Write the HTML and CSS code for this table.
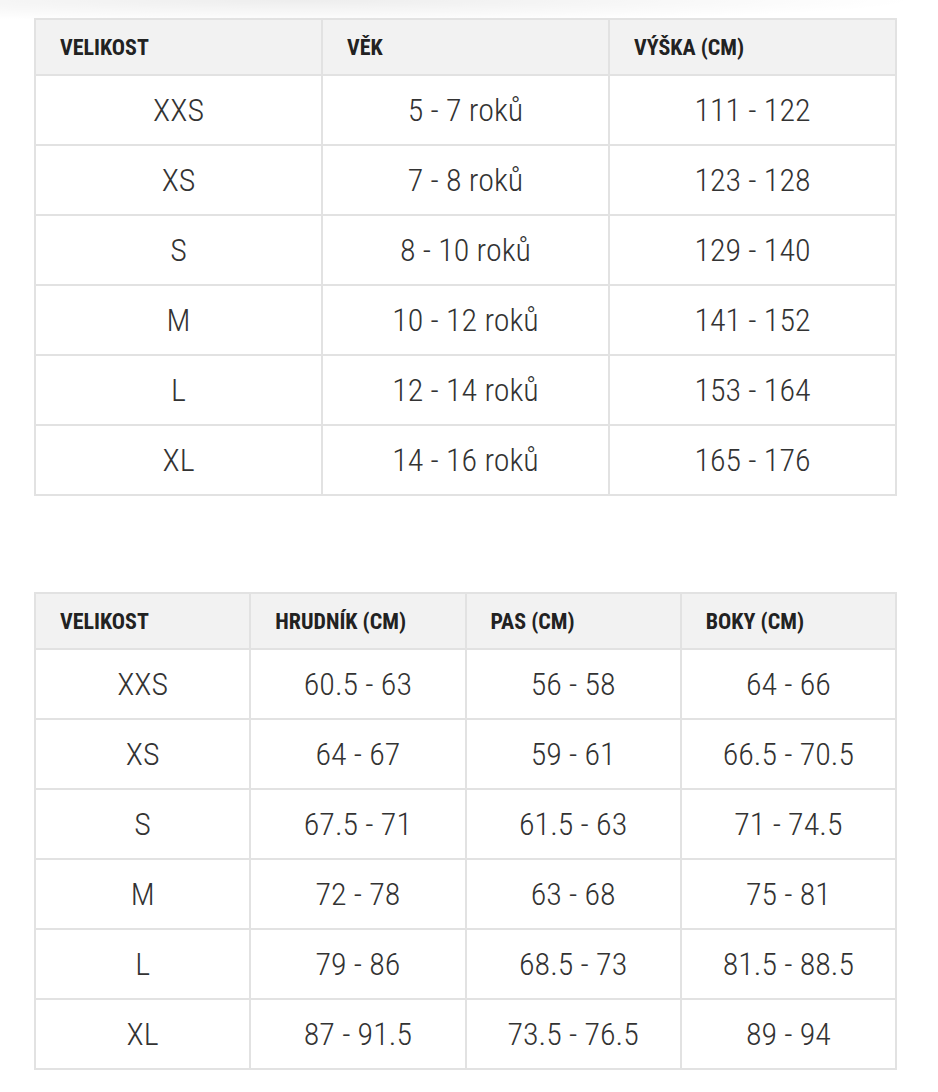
FILE: index.html
```html
<!DOCTYPE html>
<html lang="cs">
<head>
<meta charset="utf-8">
<link rel="stylesheet" href="styles.css">
</head>
<body>
<div class="page">
  <table class="sizes three">
    <thead>
      <tr><th>VELIKOST</th><th>VĚK</th><th>VÝŠKA (CM)</th></tr>
    </thead>
    <tbody>
      <tr><td>XXS</td><td>5 - 7 roků</td><td>111 - 122</td></tr>
      <tr><td>XS</td><td>7 - 8 roků</td><td>123 - 128</td></tr>
      <tr><td>S</td><td>8 - 10 roků</td><td>129 - 140</td></tr>
      <tr><td>M</td><td>10 - 12 roků</td><td>141 - 152</td></tr>
      <tr><td>L</td><td>12 - 14 roků</td><td>153 - 164</td></tr>
      <tr><td>XL</td><td>14 - 16 roků</td><td>165 - 176</td></tr>
    </tbody>
  </table>

  <table class="sizes four">
    <thead>
      <tr><th>VELIKOST</th><th>HRUDNÍK (CM)</th><th>PAS (CM)</th><th>BOKY (CM)</th></tr>
    </thead>
    <tbody>
      <tr><td>XXS</td><td>60.5 - 63</td><td>56 - 58</td><td>64 - 66</td></tr>
      <tr><td>XS</td><td>64 - 67</td><td>59 - 61</td><td>66.5 - 70.5</td></tr>
      <tr><td>S</td><td>67.5 - 71</td><td>61.5 - 63</td><td>71 - 74.5</td></tr>
      <tr><td>M</td><td>72 - 78</td><td>63 - 68</td><td>75 - 81</td></tr>
      <tr><td>L</td><td>79 - 86</td><td>68.5 - 73</td><td>81.5 - 88.5</td></tr>
      <tr><td>XL</td><td>87 - 91.5</td><td>73.5 - 76.5</td><td>89 - 94</td></tr>
    </tbody>
  </table>
</div>
</body>
</html>
```

FILE: styles.css
```css
html, body {
  margin: 0;
  padding: 0;
  background: #ffffff;
}

body {
  font-family: "Roboto Condensed", Roboto, "Liberation Sans", sans-serif;
  color: #333333;
  min-height: 1092px;
  background:
    radial-gradient(ellipse 620px 22px at 300px 0px, rgba(0,0,0,0.07), rgba(0,0,0,0) 100%),
    #ffffff;
}

.page {
  padding: 18px 41px 0 34px;
  display: flex;
  flex-direction: column;
  gap: 96px;
}

.sizes {
  width: 863px;
  border-collapse: collapse;
  table-layout: fixed;
  border: 2px solid #e2e2e2;
}

.sizes th,
.sizes td {
  border: 2px solid #e2e2e2;
}

.sizes th {
  background: #f2f2f2;
  height: 56px;
  padding: 0 0 0 24px;
  text-align: left;
  font-weight: 700;
  font-size: 22px;
  color: #222222;
  box-sizing: border-box;
}

.sizes td {
  height: 68px;
  padding: 0;
  text-align: center;
  font-weight: 300;
  font-size: 32px;
  color: #333333;
}
```
